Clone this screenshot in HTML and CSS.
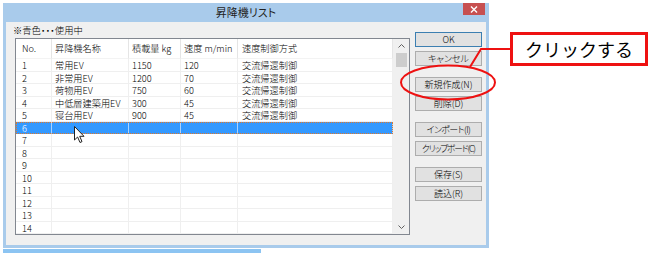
FILE: index.html
```html
<!DOCTYPE html>
<html lang="ja">
<head>
<meta charset="utf-8">
<link rel="stylesheet" href="styles.css">
</head>
<body>
<div class="stage">
  <div class="window">
    <div class="titlebar">
      <span class="title">昇降機リスト</span>
      <span class="close"><svg width="8" height="7" viewBox="0 0 8 7"><path d="M1 0.5 L7 6.5 M7 0.5 L1 6.5" stroke="#fff" stroke-width="1.4"/></svg></span>
    </div>
    <div class="client">
      <div class="main">
        <div class="legend">※青色・・・使用中</div>
        <div class="listbox">
          <div class="grid">
            <div class="row head"><span class="c no">No.</span><span class="c">昇降機名称</span><span class="c">積載量 kg</span><span class="c">速度 m/min</span><span class="c ctl">速度制御方式</span></div>
            <div class="row"><span class="c no">1</span><span class="c">常用EV</span><span class="c">1150</span><span class="c">120</span><span class="c ctl">交流帰還制御</span></div>
            <div class="row"><span class="c no">2</span><span class="c">非常用EV</span><span class="c">1200</span><span class="c">70</span><span class="c ctl">交流帰還制御</span></div>
            <div class="row"><span class="c no">3</span><span class="c">荷物用EV</span><span class="c">750</span><span class="c">60</span><span class="c ctl">交流帰還制御</span></div>
            <div class="row"><span class="c no">4</span><span class="c">中低層建築用EV</span><span class="c">300</span><span class="c">45</span><span class="c ctl">交流帰還制御</span></div>
            <div class="row"><span class="c no">5</span><span class="c">寝台用EV</span><span class="c">900</span><span class="c">45</span><span class="c ctl">交流帰還制御</span></div>
            <div class="row sel"><span class="c no">6</span><span class="c"></span><span class="c"></span><span class="c"></span><span class="c ctl"></span></div>
            <div class="row"><span class="c no">7</span><span class="c"></span><span class="c"></span><span class="c"></span><span class="c ctl"></span></div>
            <div class="row"><span class="c no">8</span><span class="c"></span><span class="c"></span><span class="c"></span><span class="c ctl"></span></div>
            <div class="row"><span class="c no">9</span><span class="c"></span><span class="c"></span><span class="c"></span><span class="c ctl"></span></div>
            <div class="row"><span class="c no">10</span><span class="c"></span><span class="c"></span><span class="c"></span><span class="c ctl"></span></div>
            <div class="row"><span class="c no">11</span><span class="c"></span><span class="c"></span><span class="c"></span><span class="c ctl"></span></div>
            <div class="row"><span class="c no">12</span><span class="c"></span><span class="c"></span><span class="c"></span><span class="c ctl"></span></div>
            <div class="row"><span class="c no">13</span><span class="c"></span><span class="c"></span><span class="c"></span><span class="c ctl"></span></div>
            <div class="row"><span class="c no">14</span><span class="c"></span><span class="c"></span><span class="c"></span><span class="c ctl"></span></div>
          </div>
          <div class="scrollbar">
            <div class="arrow"><svg width="7" height="4" viewBox="0 0 7 4"><path d="M0.5 3.5 L3.5 0.5 L6.5 3.5" fill="none" stroke="#606060" stroke-width="1"/></svg></div>
            <div class="thumb"></div>
            <div class="track"></div>
            <div class="arrow"><svg width="7" height="4" viewBox="0 0 7 4"><path d="M0.5 0.5 L3.5 3.5 L6.5 0.5" fill="none" stroke="#606060" stroke-width="1"/></svg></div>
          </div>
        </div>
      </div>
      <div class="buttons">
        <div class="btn default">OK</div>
        <div class="btn">キャンセル</div>
        <div class="btn group">新規作成(N)</div>
        <div class="btn">削除(D)</div>
        <div class="btn group tight">インポート(I)</div>
        <div class="btn tighter">クリップボード(C)</div>
        <div class="btn group">保存(S)</div>
        <div class="btn">読込(R)</div>
      </div>
    </div>
  </div>
  <div class="strip"></div>
</div>

<svg class="annot" width="651" height="255" viewBox="0 0 651 255">
  <ellipse cx="448" cy="82.5" rx="47" ry="17" fill="none" stroke="#ee1111" stroke-width="2"/>
  <polyline points="511,49 481,49 470,67" fill="none" stroke="#ee1111" stroke-width="2"/>
</svg>
<div class="callout">クリックする</div>
<svg class="cursor" width="12" height="18" viewBox="0 0 12 18"><path d="M0.5 0.5 L0.5 14 L3.6 11 L6 16.5 L8 15.6 L5.7 10.3 L10 10.3 Z" fill="#fff" stroke="#222" stroke-width="1"/></svg>
</body>
</html>
```

FILE: styles.css
```css
* { box-sizing: border-box; }
html, body { margin: 0; padding: 0; background: #fff; }
body {
  width: 651px; height: 255px; overflow: hidden; position: relative;
  font-family: "Noto Sans CJK JP", "Noto Sans", sans-serif;
  font-feature-settings: "palt" 1;
  font-weight: 300;
  color: #000;
}
.stage { padding: 3px 0 0 3px; }
.window {
  width: 486px; height: 245px;
  background: #a9cbeb;
  display: flex; flex-direction: column;
}
.titlebar {
  height: 19px; flex: none;
  display: grid; grid-template-columns: 1fr auto 1fr; align-items: start;
}
.title { grid-column: 2; font-size: 11px; line-height: 18px; color: #222; font-weight: 400; }
.close {
  grid-column: 3; justify-self: end;
  width: 22px; height: 12px; margin-right: 4px;
  background: #c75050;
  display: flex; align-items: center; justify-content: center;
}
.close svg { display: block; }
.client {
  flex: 1; margin: 0 3px 3px;
  background: #f0f0f0;
  display: flex;
}
.main { padding-left: 9px; }
.legend {
  height: 16px; margin-left: -2px; padding-top: 1px;
  font-size: 9.3px; line-height: 15px;
}
.listbox {
  width: 395px; height: 197px;
  border: 1px solid #828790;
  background: #fff;
  display: flex;
}
.grid { width: 377px; }
.row {
  display: grid;
  grid-template-columns: 36px 77px 52px 57px 155px;
  height: 12.5px;
  font-size: 9.2px; line-height: 12px;
}
.row .c {
  border-right: 1px solid #efefef;
  border-bottom: 1px solid #efefef;
  padding-left: 3px;
  white-space: nowrap; overflow: hidden;
}
.row .c.no { padding-left: 6px; }
.row .c.ctl { padding-left: 4px; }
.row.head { height: 20px; line-height: 19px; }
.row.head .c { border-right-color: #e5e5e5; border-bottom-color: #f3f3f3; }
.row.sel { background: #3399ff; color: #fff; outline: 1px dotted #e0782a; outline-offset: -1px; }
.row.sel .c { border-right-color: #a9d2ff; border-bottom-color: #3399ff; }
.scrollbar {
  width: 16px; background: #f0f0f0;
  display: flex; flex-direction: column; align-items: center;
}
.arrow { height: 14px; width: 16px; display: flex; align-items: center; justify-content: center; }
.arrow svg { display: block; }
.thumb { width: 11px; height: 14px; background: #cdcdcd; }
.track { flex: 1; }
.buttons {
  margin-left: 5px; padding-top: 10px;
  display: flex; flex-direction: column;
}
.btn {
  width: 67px; height: 15px; margin-top: 4px;
  border: 1px solid #adadad; background: #e1e1e1;
  font-size: 9px; line-height: 13px;
  display: flex; justify-content: center; align-items: center;
  white-space: nowrap;
}
.btn:first-child { margin-top: 0; }
.btn.default { border-color: #3c7fb1; }
.btn.group { margin-top: 11px; }
.btn.tight { letter-spacing: -0.6px; }
.btn.tighter { font-size: 8.6px; letter-spacing: -1.1px; }
.strip { width: 258px; height: 4px; margin-top: 1px; background: #8cc4f2; }
.annot { position: absolute; left: 0; top: 0; pointer-events: none; }
.callout {
  position: absolute; left: 510px; top: 32px;
  width: 138px; height: 34px;
  border: 3px solid #ee1111; background: #fff;
  font-size: 18px; line-height: 26px; text-align: center;
  font-feature-settings: normal; font-weight: 400;
  padding-top: 1px; color: #000;
}
.cursor { position: absolute; left: 74px; top: 126px; }
```
